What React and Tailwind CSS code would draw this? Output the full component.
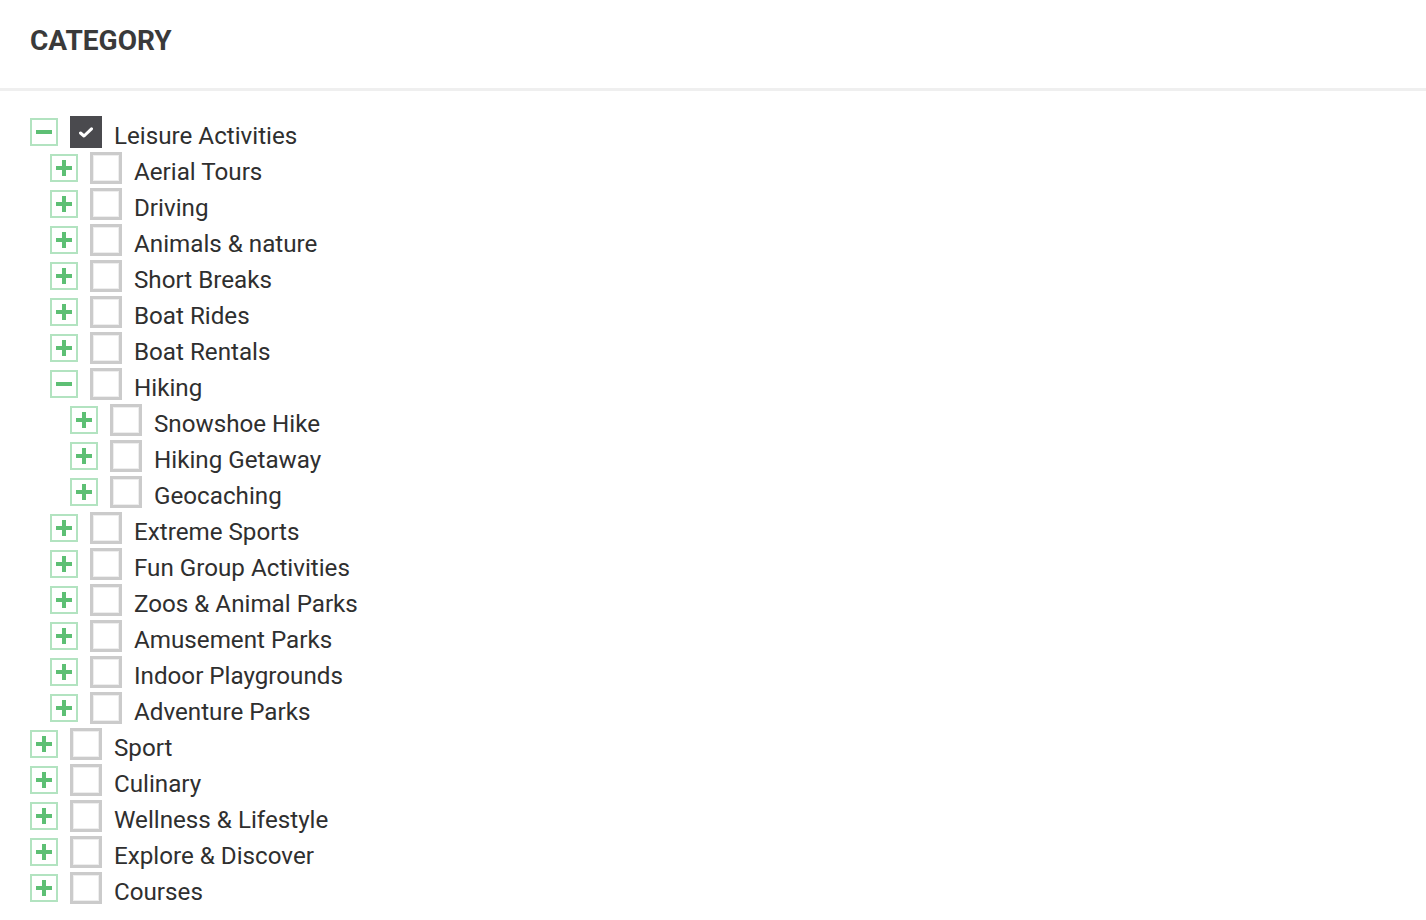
import { useState } from 'react'

const tree = [
  {
    label: 'Leisure Activities',
    open: true,
    checked: true,
    children: [
      { label: 'Aerial Tours' },
      { label: 'Driving' },
      { label: 'Animals & nature' },
      { label: 'Short Breaks' },
      { label: 'Boat Rides' },
      { label: 'Boat Rentals' },
      {
        label: 'Hiking',
        open: true,
        children: [
          { label: 'Snowshoe Hike' },
          { label: 'Hiking Getaway' },
          { label: 'Geocaching' },
        ],
      },
      { label: 'Extreme Sports' },
      { label: 'Fun Group Activities' },
      { label: 'Zoos & Animal Parks' },
      { label: 'Amusement Parks' },
      { label: 'Indoor Playgrounds' },
      { label: 'Adventure Parks' },
    ],
  },
  { label: 'Sport' },
  { label: 'Culinary' },
  { label: 'Wellness & Lifestyle' },
  { label: 'Explore & Discover' },
  { label: 'Courses' },
]

function Expander({ open }) {
  return (
    <span className="relative flex h-[28px] w-[28px] shrink-0 items-center justify-center border-2 border-[#b2e3c0] bg-white">
      <span className="absolute h-[4px] w-[16px] bg-[#5dbf74]" />
      {!open && <span className="absolute h-[16px] w-[4px] bg-[#5dbf74]" />}
    </span>
  )
}

function Checkbox({ checked }) {
  if (checked) {
    return (
      <span className="flex h-[32px] w-[32px] shrink-0 items-center justify-center bg-[#4a4a4e]">
        <svg width="14" height="11" viewBox="0 0 14 11" fill="none">
          <path d="M1.5 6 L5 9 L12.5 1.8" stroke="#fff" strokeWidth="3" strokeLinecap="round" strokeLinejoin="round" />
        </svg>
      </span>
    )
  }
  return (
    <span className="block h-[32px] w-[32px] shrink-0 border-[3px] border-[#cbcbcb] bg-white shadow-[inset_0_0_0_1px_#eeeeee]" />
  )
}

function Node({ node, depth }) {
  const [open, setOpen] = useState(!!node.open)
  return (
    <li>
      <div className="flex h-[36px] items-center" style={{ paddingLeft: depth * 20 }}>
        <button onClick={() => setOpen(!open)} className="flex">
          <Expander open={open} />
        </button>
        <span className="ml-[12px] flex">
          <Checkbox checked={node.checked} />
        </span>
        <span className="ml-[12px] pt-[9px] text-[24.2px] leading-none text-[#2f2f2f]">{node.label}</span>
      </div>
      {open && node.children && (
        <ul>
          {node.children.map((c) => (
            <Node key={c.label} node={c} depth={depth + 1} />
          ))}
        </ul>
      )}
    </li>
  )
}

export default function App() {
  return (
    <div className="min-h-screen bg-white font-['Roboto',sans-serif]">
      {/* Header */}
      <div className="h-[91px] border-b-[3px] border-[#efefef] px-[30px] pt-[27px]">
        <h2 className="text-[28px] font-bold leading-[28px] text-[#3a3a3a]">CATEGORY</h2>
      </div>

      {/* Tree */}
      <ul className="px-[30px] pt-[23px]">
        {tree.map((n) => (
          <Node key={n.label} node={n} depth={0} />
        ))}
      </ul>
    </div>
  )
}
